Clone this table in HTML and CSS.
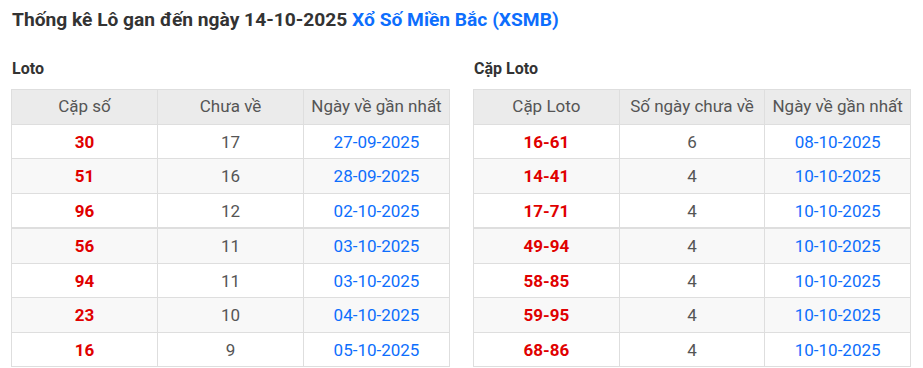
FILE: index.html
```html
<!DOCTYPE html>
<html lang="vi">
<head>
<meta charset="utf-8">
<title>Thống kê Lô gan</title>
<link rel="stylesheet" href="styles.css">
</head>
<body>
<div class="page">
  <h1 class="title">Thống kê Lô gan đến ngày 14-10-2025 <a class="link" href="#">Xổ Số Miền Bắc (XSMB)</a></h1>
  <div class="cols">
    <section class="block">
      <h2 class="sub">Loto</h2>
      <table class="tbl">
        <thead><tr><th>Cặp số</th><th>Chưa về</th><th>Ngày về gần nhất</th></tr></thead>
        <tbody>
          <tr><td class="num">30</td><td class="cnt">17</td><td class="date">27-09-2025</td></tr>
          <tr><td class="num">51</td><td class="cnt">16</td><td class="date">28-09-2025</td></tr>
          <tr class="sep"><td class="num">96</td><td class="cnt">12</td><td class="date">02-10-2025</td></tr>
          <tr><td class="num">56</td><td class="cnt">11</td><td class="date">03-10-2025</td></tr>
          <tr><td class="num">94</td><td class="cnt">11</td><td class="date">03-10-2025</td></tr>
          <tr><td class="num">23</td><td class="cnt">10</td><td class="date">04-10-2025</td></tr>
          <tr><td class="num">16</td><td class="cnt">9</td><td class="date">05-10-2025</td></tr>
        </tbody>
      </table>
    </section>
    <section class="block">
      <h2 class="sub">Cặp Loto</h2>
      <table class="tbl">
        <thead><tr><th>Cặp Loto</th><th>Số ngày chưa về</th><th>Ngày về gần nhất</th></tr></thead>
        <tbody>
          <tr><td class="num">16-61</td><td class="cnt">6</td><td class="date">08-10-2025</td></tr>
          <tr><td class="num">14-41</td><td class="cnt">4</td><td class="date">10-10-2025</td></tr>
          <tr class="sep"><td class="num">17-71</td><td class="cnt">4</td><td class="date">10-10-2025</td></tr>
          <tr><td class="num">49-94</td><td class="cnt">4</td><td class="date">10-10-2025</td></tr>
          <tr><td class="num">58-85</td><td class="cnt">4</td><td class="date">10-10-2025</td></tr>
          <tr><td class="num">59-95</td><td class="cnt">4</td><td class="date">10-10-2025</td></tr>
          <tr><td class="num">68-86</td><td class="cnt">4</td><td class="date">10-10-2025</td></tr>
        </tbody>
      </table>
    </section>
  </div>
</div>
</body>
</html>
```

FILE: styles.css
```css
* { box-sizing: border-box; }
html, body { margin: 0; padding: 0; background: #fff; }
body {
  font-family: Roboto, "Noto Sans", Arial, sans-serif;
  color: #333;
}
.page {
  padding: 9px 12px 0 11px;
}
.title {
  margin: 0 0 0 1px;
  font-size: 19.2px;
  line-height: 22px;
  font-weight: 700;
  color: #333;
}
.link {
  color: #0d6efd;
  text-decoration: none;
}
.cols {
  display: grid;
  grid-template-columns: 439px 438px;
  column-gap: 23px;
  margin-top: 28px;
}
.sub {
  margin: 0 0 10px 1px;
  font-size: 16px;
  line-height: 20px;
  font-weight: 700;
  color: #333;
}
.tbl {
  width: 100%;
  border-collapse: collapse;
  table-layout: fixed;
  font-size: 17px;
}
.tbl th, .tbl td {
  border: 1px solid #dedede;
  padding: 8px 2px;
  line-height: 17.5px;
  height: 34px;
  text-align: center;
  white-space: nowrap;
}
.tbl th {
  background: #ebebeb;
  font-weight: 400;
  color: #555;
}
.tbl tbody tr:nth-child(even) td { background: #f8f8f8; }
.tbl tr.sep td { border-bottom: 2px solid #dedede; }
.num { color: #e00000; font-weight: 700; padding-top: 9px; padding-bottom: 7px; }
.tbl td.num { padding-top: 9px; padding-bottom: 7px; }
.tbl td.cnt, .tbl td.date { padding-top: 9px; padding-bottom: 7px; }
.cnt { color: #555; }
.date { color: #0d6efd; }
```
